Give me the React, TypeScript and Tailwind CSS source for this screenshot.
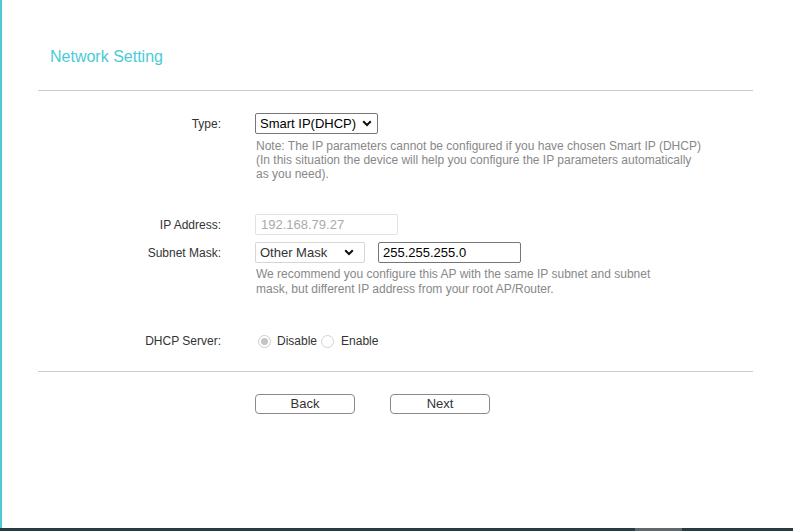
import React from "react";

function Chevron() {
  return (
    <svg width="10" height="7" viewBox="0 0 10 7" className="shrink-0">
      <path d="M1.2 1.2 L5 5 L8.8 1.2" fill="none" stroke="#111" strokeWidth="2" />
    </svg>
  );
}

function Label({ children }: { children: React.ReactNode }) {
  return (
    <div className="w-[183px] shrink-0 text-right text-[12px] text-[#333]">{children}</div>
  );
}

export default function App() {
  return (
    <div
      className="w-[793px] h-[531px] flex flex-col bg-white overflow-hidden"
      style={{ fontFamily: '"Liberation Sans", Arial, sans-serif' }}
    >
      <div className="flex-1 border-l-2 border-[#4acbd6] bg-white">
        <div className="pl-[36px] pr-[40px]">
          <div className="mt-[45px] pl-[12px] h-[24px] leading-[24px] text-[16px] text-[#4acbd6]">
            Network Setting
          </div>
          <div className="mt-[21px] h-px bg-[#cccccc]" />

          {/* Type */}
          <div className="mt-[22px] flex items-center h-[21px]">
            <Label>Type:</Label>
            <div className="ml-[34px] w-[123px] h-[21px] border border-[#767676] rounded-[2px] bg-white flex items-center pl-[4px] pr-[5px] justify-between text-[13px] text-black">
              <span>Smart IP(DHCP)</span>
              <Chevron />
            </div>
          </div>
          <div className="ml-[218px] mt-[5px] text-[12px] leading-[14px] text-[#888]">
            <div>Note: The IP parameters cannot be configured if you have chosen Smart IP (DHCP)</div>
            <div>(In this situation the device will help you configure the IP parameters automatically</div>
            <div>as you need).</div>
          </div>

          {/* IP Address */}
          <div className="mt-[33px] flex items-center h-[21px]">
            <Label>IP Address:</Label>
            <div className="ml-[34px] w-[143px] h-[21px] border border-[#e2e2e2] rounded-[2px] bg-white flex items-center pl-[5px] text-[13px] text-[#aaa]">
              192.168.79.27
            </div>
          </div>

          {/* Subnet mask */}
          <div className="mt-[7px] flex items-center h-[21px]">
            <Label>Subnet Mask:</Label>
            <div className="ml-[34px] w-[110px] h-[21px] border border-[#d6d6d6] rounded-[2px] bg-white flex items-center pl-[4px] pr-[10px] justify-between text-[13px] text-[#333]">
              <span>Other Mask</span>
              <Chevron />
            </div>
            <div className="ml-[13px] w-[143px] h-[21px] border border-[#767676] rounded-[2px] bg-white flex items-center pl-[4px] text-[13px] text-black">
              255.255.255.0
            </div>
          </div>
          <div className="ml-[218px] mt-[4px] text-[12px] leading-[15px] text-[#888]">
            <div>We recommend you configure this AP with the same IP subnet and subnet</div>
            <div>mask, but different IP address from your root AP/Router.</div>
          </div>

          {/* DHCP */}
          <div className="mt-[34px] flex items-center h-[20px]">
            <Label>DHCP Server:</Label>
            <div className="ml-[37px] flex items-center text-[12px] text-[#333]">
              <span className="w-[13px] h-[13px] rounded-full border border-[#cdcdcd] bg-white flex items-center justify-center">
                <span className="w-[7px] h-[7px] rounded-full bg-[#c4c4c4]" />
              </span>
              <span className="ml-[6px]">Disable</span>
              <span className="ml-[4px] w-[13px] h-[13px] rounded-full border border-[#d2d2d2] bg-white" />
              <span className="ml-[7px]">Enable</span>
            </div>
          </div>

          <div className="mt-[20px] h-px bg-[#cccccc]" />

          {/* Buttons */}
          <div className="mt-[22px] flex ml-[217px] gap-[35px]">
            <button className="w-[100px] h-[20px] border border-[#8a8a8a] rounded-[4px] bg-white text-[13px] text-[#333] leading-[18px]">
              Back
            </button>
            <button className="w-[100px] h-[20px] border border-[#8a8a8a] rounded-[4px] bg-white text-[13px] text-[#333] leading-[18px]">
              Next
            </button>
          </div>
        </div>
      </div>
      <div className="h-[3px] bg-[#263b42] flex">
        <div className="w-[635px]" />
        <div className="w-[47px] bg-[#5d6870]" />
      </div>
    </div>
  );
}
